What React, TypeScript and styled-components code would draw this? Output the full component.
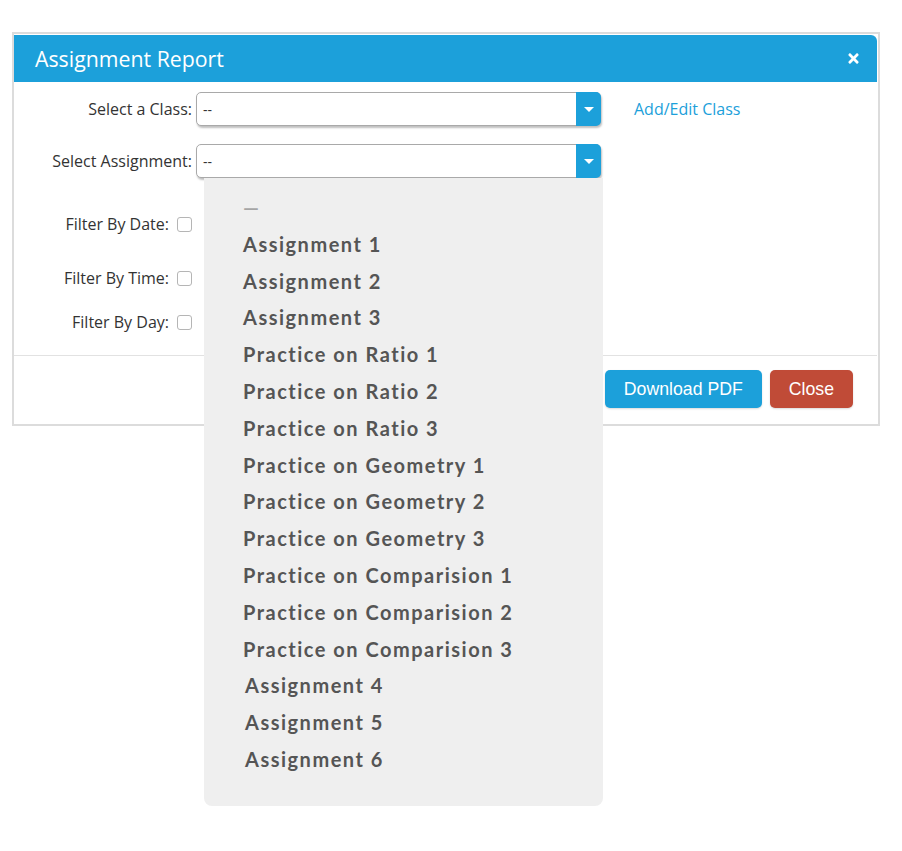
import React from "react";
import styled, { createGlobalStyle } from "styled-components";
import { FaTimes } from "react-icons/fa";

const GlobalStyle = createGlobalStyle`
  html, body { margin: 0; padding: 0; background: #fff; }
  body { font-family: "Open Sans", "Liberation Sans", sans-serif; }
`;

const Page = styled.div`
  padding: 32px 0 0 12px;
  width: 902px;
  height: 851px;
  box-sizing: border-box;
`;

const Modal = styled.div`
  width: 868px;
  height: 394px;
  box-sizing: border-box;
  border: 2px solid #dcdcdc;
  padding: 1px 1px 0 0;
  background: #fff;
  display: flex;
  flex-direction: column;
`;

const Header = styled.div`
  height: 47px;
  background: #1ca0da;
  border-top-right-radius: 6px;
  display: flex;
  align-items: center;
  justify-content: space-between;
  padding: 0 16px 0 21px;
  color: #fff;
`;

const Title = styled.h1`
  margin: 0;
  font-family: "Open Sans", sans-serif;
  font-weight: 400;
  font-size: 21.3px;
`;

const CloseIcon = styled.span`
  display: flex;
  font-size: 15px;
  color: #fff;
`;

const Body = styled.div`
  padding: 10px 0 0 0;
  border-bottom: 1px solid #e2e2e2;
  height: 274px;
  box-sizing: border-box;
`;

const Row = styled.div<{ $top: number; $h: number }>`
  display: grid;
  grid-template-columns: 178px 405px auto;
  column-gap: 4px;
  align-items: center;
  margin-top: ${(p) => p.$top}px;
  height: ${(p) => p.$h}px;
`;

const LabelGroup = styled.div`
  justify-self: end;
  display: flex;
  align-items: center;
  gap: 8px;
`;

const Label = styled.label`
  font-family: "Open Sans", sans-serif;
  font-size: 16px;
  color: #333;
  white-space: nowrap;
`;

const SelectBox = styled.div`
  position: relative;
  height: 34px;
  box-sizing: border-box;
  border: 1px solid #a9a9a9;
  border-radius: 5px;
  box-shadow: 1px 2px 2px rgba(0, 0, 0, 0.25);
  background: #fff;
  display: flex;
  align-items: center;
`;

const SelectValue = styled.span`
  flex: 1;
  padding-left: 6px;
  font-family: "Open Sans", sans-serif;
  font-size: 14px;
  color: #333;
`;

const Arrow = styled.span`
  width: 25px;
  align-self: stretch;
  margin: -1px -1px -1px 0;
  background: #1ca0da;
  border-radius: 0 5px 5px 0;
  display: flex;
  align-items: center;
  justify-content: center;
  &::after {
    content: "";
    border-left: 5px solid transparent;
    border-right: 5px solid transparent;
    border-top: 5px solid #fff;
    margin-top: 1px;
  }
`;

const Link = styled.a`
  margin-left: 29px;
  font-family: "Open Sans", sans-serif;
  font-size: 16px;
  color: #1ca0da;
  text-decoration: none;
`;

const Checkbox = styled.span`
  width: 15px;
  height: 15px;
  box-sizing: border-box;
  border: 1px solid #b5b5b5;
  border-radius: 3px;
  background: #fff;
`;

const Dropdown = styled.ul`
  position: absolute;
  top: calc(100% + 1px);
  left: 7px;
  width: 399px;
  height: 628px;
  margin: 0;
  padding: 11px 0 0 39px;
  box-sizing: border-box;
  list-style: none;
  background: #efefef;
  border-radius: 0 0 8px 8px;
  z-index: 5;
`;

const Option = styled.li<{ $muted?: boolean; $shift?: number }>`
  height: 36.8px;
  line-height: 36.8px;
  font-family: Lato, "Open Sans", sans-serif;
  font-weight: 700;
  font-size: 20px;
  letter-spacing: 1.5px;
  color: ${(p) => (p.$muted ? "#a5a5a5" : "#555")};
  padding-left: ${(p) => p.$shift ?? 0}px;
`;

const Footer = styled.div`
  flex: 1;
  display: flex;
  justify-content: flex-end;
  align-items: flex-start;
  gap: 8px;
  padding: 14px 24px 0 0;
`;

const Button = styled.button<{ $variant: "primary" | "danger" }>`
  height: 38px;
  padding: 0 19px;
  border: none;
  border-radius: 5px;
  font-family: "Liberation Sans", Arial, sans-serif;
  font-size: 17.7px;
  color: #fff;
  background: ${(p) => (p.$variant === "primary" ? "#1ca0da" : "#c04b37")};
  box-shadow: 0 1px 2px rgba(0, 0, 0, 0.15);
`;

const options: { text: string; shift?: number }[] = [
  { text: "Assignment 1" },
  { text: "Assignment 2" },
  { text: "Assignment 3" },
  { text: "Practice on Ratio 1" },
  { text: "Practice on Ratio 2" },
  { text: "Practice on Ratio 3" },
  { text: "Practice on Geometry 1" },
  { text: "Practice on Geometry 2" },
  { text: "Practice on Geometry 3" },
  { text: "Practice on Comparision 1" },
  { text: "Practice on Comparision 2" },
  { text: "Practice on Comparision 3" },
  { text: "Assignment 4", shift: 2 },
  { text: "Assignment 5", shift: 2 },
  { text: "Assignment 6", shift: 2 },
];

export default function App() {
  return (
    <>
      <GlobalStyle />
      <Page>
        <Modal>
          <Header>
            <Title>Assignment Report</Title>
            <CloseIcon>
              <FaTimes />
            </CloseIcon>
          </Header>
          <Body>
            <Row $top={0} $h={34}>
              <LabelGroup>
                <Label>Select a Class:</Label>
              </LabelGroup>
              <SelectBox>
                <SelectValue>--</SelectValue>
                <Arrow />
              </SelectBox>
              <Link href="#">Add/Edit Class</Link>
            </Row>
            <Row $top={18} $h={34}>
              <LabelGroup>
                <Label>Select Assignment:</Label>
              </LabelGroup>
              <SelectBox>
                <SelectValue>--</SelectValue>
                <Arrow />
                <Dropdown>
                  <Option $muted>—</Option>
                  {options.map((o) => (
                    <Option key={o.text} $shift={o.shift}>
                      {o.text}
                    </Option>
                  ))}
                </Dropdown>
              </SelectBox>
            </Row>
            <Row $top={31} $h={30}>
              <LabelGroup>
                <Label>Filter By Date:</Label>
                <Checkbox />
              </LabelGroup>
            </Row>
            <Row $top={24} $h={30}>
              <LabelGroup>
                <Label>Filter By Time:</Label>
                <Checkbox />
              </LabelGroup>
            </Row>
            <Row $top={14} $h={30}>
              <LabelGroup>
                <Label>Filter By Day:</Label>
                <Checkbox />
              </LabelGroup>
            </Row>
          </Body>
          <Footer>
            <Button $variant="primary">Download PDF</Button>
            <Button $variant="danger">Close</Button>
          </Footer>
        </Modal>
      </Page>
    </>
  );
}
